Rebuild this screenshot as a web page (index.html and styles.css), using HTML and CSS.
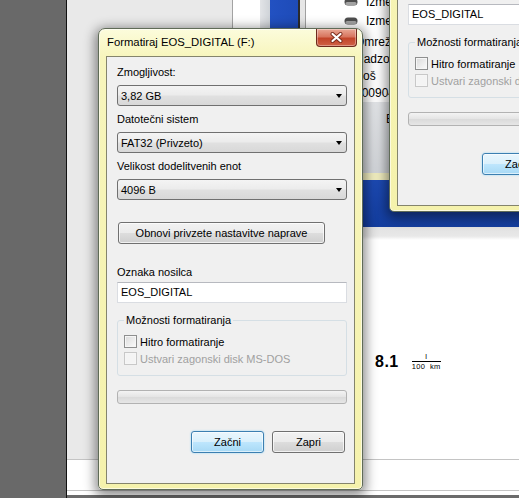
FILE: index.html
```html
<!DOCTYPE html>
<html lang="sl">
<head>
    <meta charset="UTF-8">
    <meta name="viewport" content="width=device-width, initial-scale=1.0">
    <title>Formatiraj EOS_DIGITAL (F:)</title>
    <link rel="stylesheet" href="styles.css">
</head>
<body>
    <div class="screen">
        <div class="dark-side"></div>

        <div class="workspace">
            <div class="upper">
                <div class="nav-panel"></div>
                <div class="pane">
                    <div class="pane-top">
                        <div class="col-white"></div>
                        <div class="col-grey"></div>
                        <div class="col-blue"></div>
                        <div class="col-split"></div>
                        <div class="drive-list">
                            <div class="drive-items">
                                <div class="drive-row">
                                    <svg class="drive-icon" width="14" height="8" viewBox="0 0 14 8"><rect x="0.5" y="0.5" width="13" height="7" rx="3.5" fill="#4e4e4e"/><rect x="1.5" y="4" width="11" height="3" rx="1.5" fill="#a2a2a2"/></svg>
                                    <span>Izmenljivi disk (E:)</span>
                                </div>
                                <div class="drive-row">
                                    <svg class="drive-icon" width="14" height="8" viewBox="0 0 14 8"><rect x="0.5" y="0.5" width="13" height="7" rx="3.5" fill="#4e4e4e"/><rect x="1.5" y="4" width="11" height="3" rx="1.5" fill="#a2a2a2"/></svg>
                                    <span>Izmenljivi disk (F:)</span>
                                </div>
                                <div class="detail-row">Omrežje</div>
                                <div class="detail-row">Nadzorna plošča</div>
                                <div class="detail-row">Koš</div>
                                <div class="detail-row">20090412</div>
                            </div>
                            <div class="details-bar">EOS_DIGITAL</div>
                            <div class="yellow-line"></div>
                        </div>
                    </div>
                    <div class="blue-band"></div>
                    <div class="grey-band"></div>
                    <div class="pane-body">
                        <div class="reading">
                            <span class="reading-value">8.1</span>
                            <span class="reading-unit">
                                <span class="unit-top">l</span>
                                <span class="unit-bottom">100&nbsp;&nbsp;km</span>
                            </span>
                        </div>
                    </div>
                </div>
            </div>
            <div class="status-bar"></div>
            <div class="bottom-gap"></div>
            <div class="taskbar"></div>
        </div>

        <!-- okno zadaj -->
        <div class="dialog dialog-back">
            <div class="title-bar">
                <span class="title">Formatiraj EOS_DIGITAL (F:)</span>
                <span class="close-btn">
                    <svg width="13" height="11" viewBox="0 0 13 11"><path d="M2.5 2 L10.5 9 M10.5 2 L2.5 9" stroke="#7a2c1c" stroke-width="4" stroke-linecap="round"/><path d="M2.5 2 L10.5 9 M10.5 2 L2.5 9" stroke="#fff" stroke-width="2.2" stroke-linecap="round"/></svg>
                </span>
            </div>
            <div class="client">
                <div class="field-label first">Zmogljivost:</div>
                <div class="combo"><span>3,82 GB</span><span class="arrow"></span></div>
                <div class="field-label">Datotečni sistem</div>
                <div class="combo"><span>FAT32 (Privzeto)</span><span class="arrow"></span></div>
                <div class="field-label">Velikost dodelitvenih enot</div>
                <div class="combo"><span>4096 B</span><span class="arrow"></span></div>
                <button class="btn reset-btn">Obnovi privzete nastavitve naprave</button>
                <div class="field-label label-name">Oznaka nosilca</div>
                <div class="text-input">EOS_DIGITAL</div>
                <fieldset class="options">
                    <legend>Možnosti formatiranja</legend>
                    <div class="check-row"><span class="check"></span>Hitro formatiranje</div>
                    <div class="check-row disabled"><span class="check"></span>Ustvari zagonski disk MS-DOS</div>
                </fieldset>
                <div class="progress"></div>
                <div class="actions">
                    <button class="btn btn-default">Začni</button>
                    <button class="btn">Zapri</button>
                </div>
            </div>
        </div>

        <!-- okno spredaj -->
        <div class="dialog dialog-front">
            <div class="title-bar">
                <span class="title">Formatiraj EOS_DIGITAL (F:)</span>
                <span class="close-btn">
                    <svg width="13" height="11" viewBox="0 0 13 11"><path d="M2.5 2 L10.5 9 M10.5 2 L2.5 9" stroke="#7a2c1c" stroke-width="4" stroke-linecap="round"/><path d="M2.5 2 L10.5 9 M10.5 2 L2.5 9" stroke="#fff" stroke-width="2.2" stroke-linecap="round"/></svg>
                </span>
            </div>
            <div class="client">
                <div class="field-label first">Zmogljivost:</div>
                <div class="combo"><span>3,82 GB</span><span class="arrow"></span></div>
                <div class="field-label">Datotečni sistem</div>
                <div class="combo"><span>FAT32 (Privzeto)</span><span class="arrow"></span></div>
                <div class="field-label">Velikost dodelitvenih enot</div>
                <div class="combo"><span>4096 B</span><span class="arrow"></span></div>
                <button class="btn reset-btn">Obnovi privzete nastavitve naprave</button>
                <div class="field-label label-name">Oznaka nosilca</div>
                <div class="text-input">EOS_DIGITAL</div>
                <fieldset class="options">
                    <legend>Možnosti formatiranja</legend>
                    <div class="check-row"><span class="check"></span>Hitro formatiranje</div>
                    <div class="check-row disabled"><span class="check"></span>Ustvari zagonski disk MS-DOS</div>
                </fieldset>
                <div class="progress"></div>
                <div class="actions">
                    <button class="btn btn-default">Začni</button>
                    <button class="btn">Zapri</button>
                </div>
            </div>
        </div>
    </div>
</body>
</html>
```

FILE: styles.css
```css
* {
    box-sizing: border-box;
}
body {
    margin: 0;
    font-family: "Liberation Sans", Arial, sans-serif;
    font-size: 11px;
    color: #000;
}
.screen {
    position: relative;
    width: 519px;
    height: 498px;
    overflow: hidden;
    display: flex;
    background: #fff;
}

/* --- ozadje (namizje + raziskovalec) --- */
.dark-side {
    width: 67px;
    background: #696969;
    border-right: 1px solid #111;
}
.workspace {
    flex: 1;
    display: flex;
    flex-direction: column;
}
.upper {
    height: 459px;
    display: flex;
}
.nav-panel {
    width: 166px;
    background: #e9e9e9;
    border-right: 1px solid #a3a3a3;
}
.pane {
    flex: 1;
    display: flex;
    flex-direction: column;
    background: #fff;
}
.pane-top {
    height: 180px;
    display: flex;
}
.col-white {
    width: 27px;
    background: #fff;
}
.col-grey {
    width: 10px;
    background: linear-gradient(90deg, #e2e4e7, #cfd3d8);
}
.col-blue {
    width: 28px;
    background: linear-gradient(90deg, #2251c2, #1e4bb8);
}
.col-split {
    width: 8px;
    background: #e6e6e6;
    border-left: 2px solid #2b2b2b;
    border-right: 1px solid #a0a0a0;
}
.drive-list {
    flex: 1;
    display: flex;
    flex-direction: column;
    font-size: 12px;
    white-space: nowrap;
    overflow: hidden;
}
.drive-items {
    margin-top: -8px;
}
.drive-row {
    height: 19px;
    display: flex;
    align-items: center;
    padding-left: 38px;
}
.drive-icon {
    margin-right: 8px;
}
.detail-row {
    height: 17px;
    line-height: 17px;
    padding-left: 49px;
}
.drive-items .detail-row:nth-child(3) {
    margin-top: 4px;
}
.details-bar {
    flex: 1;
    background: linear-gradient(#e4e6e9, #d3d6da);
    padding: 10px 0 0 80px;
}
.yellow-line {
    height: 7px;
    background: #f1eec0;
}
.blue-band {
    height: 47px;
    background: linear-gradient(#1d4ab4, #133d9e);
}
.grey-band {
    height: 13px;
    background: linear-gradient(#e2e2e2, #e8e8e8 70%, #fff);
}
.pane-body {
    flex: 1;
    padding: 113px 0 0 142px;
}
.reading {
    display: flex;
    align-items: center;
    gap: 13px;
}
.reading-value {
    font-weight: bold;
    font-size: 16px;
    line-height: 16px;
    letter-spacing: 0.5px;
}
.reading-unit {
    display: flex;
    flex-direction: column;
    align-items: center;
    font-size: 7.5px;
    line-height: 7px;
}
.unit-top {
    padding-bottom: 1px;
}
.unit-bottom {
    border-top: 1px solid #000;
    padding-top: 1px;
    letter-spacing: 0.3px;
}
.status-bar {
    height: 32px;
    border-top: 1px solid #c4c4c4;
    border-bottom: 1px solid #c4c4c4;
    background: #fff;
}
.bottom-gap {
    height: 4px;
    background: #fff;
}
.taskbar {
    flex: 1;
    background: #6b6b6b;
}

/* --- pogovorno okno --- */
.dialog {
    position: absolute;
    width: 265px;
    height: 462px;
    display: flex;
    flex-direction: column;
    padding: 0 7px 5px 7px;
    border: 1px solid #5f6b57;
    border-radius: 7px 7px 5px 5px;
    background: linear-gradient(#fcfcdc, #f7f5bc 28px, #f5f2ac);
    box-shadow: 0 3px 12px 3px rgba(0, 0, 0, 0.45), inset 0 0 0 1px rgba(255, 255, 255, 0.6);
}
.dialog-front {
    left: 98px;
    top: 28px;
}
.dialog-back {
    left: 389px;
    top: -250px;
}
.title-bar {
    position: relative;
    height: 27px;
    display: flex;
    align-items: center;
    padding-left: 1px;
}
.title {
    font-size: 11.3px;
    margin-top: -1px;
}
.close-btn {
    position: absolute;
    top: 0;
    right: -2px;
    width: 41px;
    height: 18px;
    display: flex;
    align-items: center;
    justify-content: center;
    border: 1px solid #6e2a1c;
    border-top: none;
    border-radius: 0 0 4px 4px;
    background: linear-gradient(#e9a896, #d8765f 45%, #c2452a 55%, #cf6246);
    box-shadow: inset 0 0 0 1px rgba(255, 255, 255, 0.35);
}
.client {
    flex: 1;
    display: flex;
    flex-direction: column;
    padding: 0 7px 0 10px;
    background: #f0f0f0;
    border: 1px solid #84846c;
}
.field-label {
    line-height: 15px;
    margin-top: 6px;
}
.field-label.first {
    margin-top: 8px;
}
.field-label.label-name {
    margin-top: 21px;
}
.combo {
    height: 21px;
    margin-top: 5px;
    display: flex;
    align-items: center;
    justify-content: space-between;
    padding: 0 4px 0 3px;
    border: 1px solid #707070;
    border-radius: 3px;
    background: linear-gradient(#f4f4f4, #ececec 45%, #e0e0e0 55%, #d8d8d8);
}
.arrow {
    width: 0;
    height: 0;
    border-left: 3.5px solid transparent;
    border-right: 3.5px solid transparent;
    border-top: 4px solid #000;
}
.btn {
    height: 22px;
    padding: 0;
    font: inherit;
    color: #000;
    border: 1px solid #707070;
    border-radius: 3px;
    background: linear-gradient(#f2f2f2, #ebebeb 50%, #dddddd 51%, #cfcfcf);
    box-shadow: inset 0 0 0 1px rgba(255, 255, 255, 0.7);
}
.reset-btn {
    align-self: flex-start;
    width: 207px;
    margin: 22px 0 0 1px;
}
.text-input {
    height: 21px;
    margin-top: 2px;
    padding-left: 3px;
    line-height: 19px;
    background: #fff;
    border: 1px solid #dadde2;
    border-top-color: #b7b9bf;
}
.options {
    margin: 10px 0 0 0;
    padding: 5px 0 8px 6px;
    border: 1px solid #d5dfe5;
    border-radius: 3px;
}
.options legend {
    padding: 0 2px;
    line-height: 15px;
}
.check-row {
    height: 17px;
    display: flex;
    align-items: center;
}
.check {
    width: 13px;
    height: 13px;
    margin-right: 3px;
    border: 1px solid #8e8f8f;
    background: linear-gradient(135deg, #dadada, #fbfbfb);
    box-shadow: inset 0 0 0 1px #f6f6f6;
}
.check-row.disabled {
    color: #a0a0a0;
}
.check-row.disabled .check {
    border-color: #c8c8c8;
    background: #f4f4f4;
}
.progress {
    height: 14px;
    margin-top: 14px;
    border: 1px solid #b2b2b2;
    border-radius: 3px;
    background: linear-gradient(#f3f3f3, #e4e4e4 50%, #dadada 51%, #e6e6e6);
}
.actions {
    display: flex;
    justify-content: flex-end;
    gap: 8px;
    margin: 27px 2px 0 0;
}
.actions .btn {
    width: 73px;
}
.btn-default {
    border-color: #3c7fb1;
    background: linear-gradient(#eaf6fd, #d9f0fc 50%, #bee6fd 51%, #a7d9f5);
    box-shadow: inset 0 0 0 1px rgba(255, 255, 255, 0.6), 0 0 2px #8fd3f7;
}
```
